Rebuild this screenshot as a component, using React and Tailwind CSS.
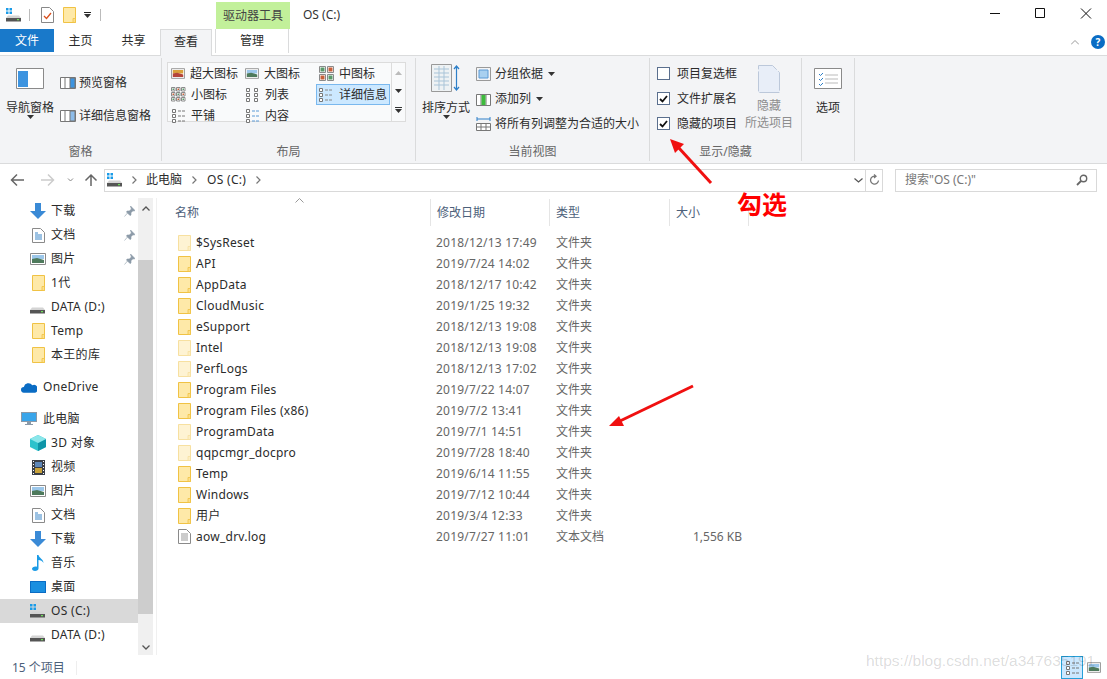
import React from 'react';

const Folder = ({ faded }) => (
  <svg width="13" height="16" viewBox="0 0 13 16" className={faded ? 'shrink-0 opacity-50' : 'shrink-0'}>
    <path d="M.5.500h12v15H.5z" fill="#fde28f" stroke="#f0c244" />
    <path d="M1 1h11v14H1z" fill="#fee9a8" />
    <path d="M10 15.500v-4h2.500v4z" fill="#fde08a" stroke="#f0c244" strokeWidth=".8" />
  </svg>
);

const Drive = ({ win }) => (
  <svg width="16" height="14" viewBox="0 0 16 14" className="shrink-0">
    {win && <path d="M0 0h2.500v2.500H0zM3.500 0H6v2.500H3.500zM0 3.500h2.500V6H0zM3.500 3.500H6V6H3.500z" fill="#1a9be8" />}
    <path d="M2 7.500h11l2 2.500H0z" fill="#d4d4d4" />
    <path d="M0 10h15v3.500H0z" fill="#555" />
    <path d="M11 11h2v1.200h-2z" fill="#6fe05a" />
  </svg>
);

const Pic = ({ w = 16, h = 12, art }) => (
  <svg width={w} height={h} viewBox="0 0 16 12" className="shrink-0">
    <path d="M.5.500h15v11H.5z" fill="#fff" stroke="#8a8a8a" />
    <path d="M2 2h12v4H2z" fill={art ? '#d9a03a' : '#9cc7ea'} />
    <path d="M2 6l5-1 7 2v3H2z" fill={art ? '#b5453a' : '#4e7a5c'} />
  </svg>
);

const Doc = () => (
  <svg width="13" height="15" viewBox="0 0 13 15" className="shrink-0">
    <path d="M.5.500h8l4 4v10H.5z" fill="#fff" stroke="#8a8a8a" />
    <path d="M3 5h3M3 7h7M3 9h7M3 11h7" stroke="#3b86c8" />
  </svg>
);

const Down = () => (
  <svg width="16" height="16" viewBox="0 0 16 16" className="shrink-0">
    <path d="M5 0h6v8h5l-8 8-8-8h5z" fill="#3a8ad6" />
  </svg>
);

const Pin = () => (
  <svg width="11" height="11" viewBox="0 0 11 11" className="shrink-0">
    <path d="M6.500 0L11 4.500l-1 .6-1-.4-2 2v2.300l-1 .6L2.500 6l.6-1h2.300l2-2-.4-1zM3.500 7L.5 10.500" fill="#8c9aa8" stroke="#8c9aa8" strokeWidth=".6" />
  </svg>
);

const Caret = () => (
  <svg width="7" height="4" viewBox="0 0 7 4" className="shrink-0"><path d="M0 0h7L3.500 4z" fill="#333" /></svg>
);

const Chevron = ({ className }) => (
  <svg width="5" height="8" viewBox="0 0 5 8" className={className}><path d="M.5.500L4 4 .5 7.500" fill="none" stroke="#777" strokeWidth="1.200" /></svg>
);

const Grid = ({ n, cell, gap }) => {
  const boxes = [];
  for (let y = 0; y < n; y++) {
    for (let x = 0; x < n; x++) {
      const px = 0.5 + x * (cell + gap);
      const py = 0.5 + y * (cell + gap);
      boxes.push(<path key={`b${x}-${y}`} d={`M${px} ${py}h${cell}v${cell}h-${cell}z`} fill="#fff" stroke="#8a8a8a" />);
      boxes.push(<path key={`d${x}-${y}`} d={`M${px + 1} ${py + 1}h${cell - 2}v${cell - 2}h-${cell - 2}z`} fill={(x + y) % 2 ? '#c9603a' : '#5a9a6a'} />);
    }
  }
  return <svg width="15" height="15" viewBox="0 0 15 15" className="shrink-0">{boxes}</svg>;
};

const ListGlyph = ({ cols, lines }) => (
  <svg width="15" height="15" viewBox="0 0 15 15" className="shrink-0">
    {[...Array(cols)].map((_, c) => [0, 5, 10].map(y => (
      <path key={`${c}${y}`} d={`M${1.500 + c * 8} ${1.500 + y}h3v3h-3z`} fill="#fff" stroke="#777" />
    )))}
    {lines && [3, 8, 13].map(y => <path key={y} d={`M7 ${y}h8`} stroke={lines} strokeDasharray="3 1" />)}
  </svg>
);

const GalleryCell = ({ icon, label, active }) => (
  <div className={active
    ? 'flex items-center w-[74px] h-[21px] pl-[1px] gap-[6px] bg-[#cce8ff] border border-[#7ab8ee] shrink-0'
    : 'flex items-center w-[74px] h-[21px] pl-[3px] gap-[5px] shrink-0'}>
    {icon}
    <span className="whitespace-nowrap">{label}</span>
  </div>
);

const Group = ({ w, label, children, last }) => (
  <div className={`flex flex-col shrink-0 h-[103px] mt-[3px] ${last ? '' : 'border-r border-[#dadbdc]'}`} style={{ width: w }}>
    <div className="h-[84px] flex">{children}</div>
    <div className="flex-1 flex items-center justify-center text-[#666]">{label}</div>
  </div>
);

const Big = ({ icon, label, caret, w }) => (
  <div className="flex flex-col items-center shrink-0" style={{ width: w }}>
    <div className="h-[31px] flex items-end justify-center">{icon}</div>
    <div className="mt-[11px] leading-[16px] whitespace-nowrap">{label}</div>
    {caret && <div className="-mt-[1px]"><Caret /></div>}
  </div>
);

const rows = [
  ['$SysReset', '2018/12/13 17:49', '文件夹', '', true],
  ['API', '2019/7/24 14:02', '文件夹'],
  ['AppData', '2018/12/17 10:42', '文件夹'],
  ['CloudMusic', '2019/1/25 19:32', '文件夹'],
  ['eSupport', '2018/12/13 19:08', '文件夹'],
  ['Intel', '2018/12/13 19:08', '文件夹', '', true],
  ['PerfLogs', '2018/12/13 17:02', '文件夹', '', true],
  ['Program Files', '2019/7/22 14:07', '文件夹'],
  ['Program Files (x86)', '2019/7/2 13:41', '文件夹'],
  ['ProgramData', '2019/7/1 14:51', '文件夹', '', true],
  ['qqpcmgr_docpro', '2019/7/28 18:40', '文件夹', '', true],
  ['Temp', '2019/6/14 11:55', '文件夹'],
  ['Windows', '2019/7/12 10:44', '文件夹'],
  ['用户', '2019/3/4 12:33', '文件夹'],
];

const NavRow = ({ icon, label, pin, active, top }) => (
  <div className={`flex items-center h-[24px] ${top ? 'pl-[21px] gap-[6px]' : 'pl-[30px] gap-[5px]'} ${active ? 'bg-[#d9d9d9]' : ''}`}>
    <div className="w-[16px] flex justify-center shrink-0">{icon}</div>
    <span className="flex-1 whitespace-nowrap tracking-[.3px]">{label}</span>
    {pin && <div className="mr-[3px]"><Pin /></div>}
  </div>
);

const Cloud = () => (
  <svg width="17" height="11" viewBox="0 0 17 11"><path d="M3 11a3 3 0 010-6 5 5 0 019-2 4 4 0 013 8z" fill="#0a6cc4" /></svg>
);
const Monitor = () => (
  <svg width="16" height="14" viewBox="0 0 16 14"><path d="M0 0h16v10H0z" fill="#8a99a8" /><path d="M1 1h14v8H1z" fill="#39a5ea" /><path d="M6 10h4v2h2v1H4v-1h2z" fill="#8a99a8" /></svg>
);
const Cube = () => (
  <svg width="16" height="16" viewBox="0 0 16 16"><path d="M8 0l8 4v8l-8 4-8-4V4z" fill="#2dc2cc" /><path d="M8 8l8-4v8l-8 4z" fill="#0e95a8" /><path d="M8 0l8 4-8 4-8-4z" fill="#8be6ea" /></svg>
);
const Film = () => (
  <svg width="13" height="15" viewBox="0 0 13 15"><path d="M0 0h13v15H0z" fill="#3b3f48" /><path d="M3 2h7v5H3z" fill="#5d86b8" /><path d="M3 8h7v5H3z" fill="#c9a23a" /><path d="M1 1h1v1H1zM1 4h1v1H1zM1 7h1v1H1zM1 10h1v1H1zM1 13h1v1H1zM11 1h1v1h-1zM11 4h1v1h-1zM11 7h1v1h-1zM11 10h1v1h-1zM11 13h1v1h-1z" fill="#fff" /></svg>
);
const Note = () => (
  <svg width="12" height="16" viewBox="0 0 12 16"><path d="M5 0h1.500c.5 3 5 4 5 8-1-2-3-3-5-3v8.500c0 1.500-1.500 2.500-3.500 2.500S0 15 0 13.800 1.500 11.500 3.500 11.500c.6 0 1 .1 1.500.3z" fill="#1b9be6" /></svg>
);
const Desk = () => (
  <svg width="16" height="12" viewBox="0 0 16 12"><path d="M0 0h16v12H0z" fill="#1a8fe0" /><path d="M0 11h16v1H0z" fill="#0a5ea8" /><path d="M.5.500h15v11H.5z" fill="none" stroke="#0a6cc4" /></svg>
);

export default function App() {
  return (
    <div className="relative w-[1107px] h-[679px] overflow-hidden bg-white text-[12px] text-[#2b2b2b] font-['Noto_Sans','Noto_Sans_CJK_SC',sans-serif]">
      {/* title bar */}
      <div className="flex h-[29px] items-center">
        <div className="pl-[6px] w-[29px]"><Drive win /></div>
        <div className="w-px h-[12px] bg-[#bbb]" />
        <svg width="13" height="16" viewBox="0 0 13 16" className="ml-[11px]">
          <path d="M.5.500h8l4 4v11H.5z" fill="#fff" stroke="#888" />
          <path d="M3 9l2.500 2.500L10 6" fill="none" stroke="#d9501e" strokeWidth="1.300" />
        </svg>
        <div className="ml-[9px]"><Folder /></div>
        <div className="ml-[8px] flex flex-col items-center gap-[1px]"><div className="w-[7px] h-px bg-[#222]" /><Caret /></div>
        <div className="ml-[9px] w-px h-[12px] bg-[#bbb]" />
        <div className="ml-[115px] w-[74px] h-[27px] mt-[2px] bg-[#c2f09a] flex items-center justify-center text-[#444]">驱动器工具</div>
        <div className="ml-[13px] text-[#333]">OS (C:)</div>
        <svg width="117" height="14" viewBox="0 0 117 14" className="ml-auto mr-[3px] mb-[3px]">
          <path d="M3 7.500h10M48.500 2.500h9v9h-9zM94 2.500l10 10M104 2.500l-10 10" fill="none" stroke="#111" />
        </svg>
      </div>

      {/* tabs */}
      <div className="relative z-10 flex h-[27px] -mb-px items-start border-b border-[#dadbdc]">
        <div className="w-[54px] h-[23px] pt-[1px] bg-[#1979ca] text-white flex items-center justify-center">文件</div>
        <div className="w-[53px] h-[23px] pt-[1px] flex items-center justify-center">主页</div>
        <div className="w-[53px] h-[23px] pt-[1px] flex items-center justify-center">共享</div>
        <div className="w-[52px] h-[27px] bg-[#f3f4f6] border border-b-0 border-[#dadbdc] flex items-center justify-center pb-[3px]">查看</div>
        <div className="ml-[3px] w-[74px] h-[24px] border-x border-[#dadbdc] flex items-center justify-center">管理</div>
        <svg width="8" height="5" viewBox="0 0 8 5" className="ml-auto mt-[11px] mr-[12px]"><path d="M0 4.500l4-4 4 4" fill="none" stroke="#999" /></svg>
        <div className="w-[14px] h-[14px] mt-[6px] mr-[2px] rounded-full bg-[#0a6cc4] text-white text-[10px] font-bold leading-[14px] text-center">?</div>
      </div>

      {/* ribbon */}
      <div className="flex h-[109px] bg-[#f3f4f6] border-b border-[#dadbdc]">
        <Group w={162} label="窗格">
          <Big w={60} caret label="导航窗格" icon={
            <svg width="28" height="21" viewBox="0 0 28 21"><path d="M.5.500h27v20H.5z" fill="#fff" stroke="#8a8a8a" /><path d="M2 3h10v16H2z" fill="#3d94e0" /></svg>
          } />
          <div className="flex flex-col pt-[19px] gap-[21px] whitespace-nowrap">
            <div className="flex items-center gap-[3px] h-[12px]"><svg width="16" height="12" viewBox="0 0 16 12"><path d="M.5.500h15v11H.5z" fill="#fff" stroke="#777" /><path d="M5 1v10M10 1h5v10h-5z" fill="#3d94e0" stroke="#777" /></svg>预览窗格</div>
            <div className="flex items-center gap-[3px] h-[12px]"><svg width="16" height="12" viewBox="0 0 16 12"><path d="M.5.500h15v11H.5z" fill="#fff" stroke="#777" /><path d="M5 1v10M10 1h5v10h-5z" fill="#8cbcea" stroke="#777" /></svg>详细信息窗格</div>
          </div>
        </Group>

        <Group w={254} label="布局">
          <div className="mt-[4px] ml-[5px] w-[239px] h-[60px] border border-[#dcdcdc] bg-[#f9fafb] flex">
            <div className="w-[223px] flex flex-wrap content-start">
              <GalleryCell icon={<Pic w={14} h={11} art />} label="超大图标" />
              <GalleryCell icon={<Pic w={14} h={11} />} label="大图标" />
              <GalleryCell icon={<Grid n={2} cell={6} gap={2} />} label="中图标" />
              <GalleryCell icon={<Grid n={3} cell={3.500} gap={1.500} />} label="小图标" />
              <GalleryCell icon={<ListGlyph cols={2} />} label="列表" />
              <GalleryCell icon={<ListGlyph cols={1} lines="#888" />} label="详细信息" active />
              <GalleryCell icon={<ListGlyph cols={1} lines="#777" />} label="平铺" />
              <GalleryCell icon={<ListGlyph cols={1} lines="#5a9ad6" />} label="内容" />
            </div>
            <div className="flex-1 border-l border-[#dcdcdc] flex flex-col items-center pt-[8px] gap-[14px]">
              <svg width="7" height="4" viewBox="0 0 7 4"><path d="M0 4h7L3.500 0z" fill="#bbb" /></svg>
              <Caret />
              <div className="flex flex-col items-center gap-[1px]"><div className="w-[7px] h-px bg-[#333]" /><Caret /></div>
            </div>
          </div>
        </Group>

        <Group w={234} label="当前视图">
          <Big w={60} caret label="排序方式" icon={
            <svg width="30" height="28" viewBox="0 0 30 28" className="-mb-[3px]"><path d="M.5.500h20v27H.5z" fill="#eef2f4" stroke="#999" /><path d="M3 5h15M3 9h15M3 13h15M3 17h15M3 21h15M8 2v24M13 2v24" stroke="#a9c4d8" /><path d="M25.500 2v24M23 5l2.500-3L28 5M23 23l2.500 3 2.500-3" fill="none" stroke="#2d7fc8" strokeWidth="1.200" /></svg>
          } />
          <div className="flex flex-col pt-[3px] whitespace-nowrap">
            <div className="flex items-center h-[25px] gap-[4px]"><svg width="15" height="14" viewBox="0 0 15 14"><path d="M.5.500h14v13H.5z" fill="none" stroke="#999" /><path d="M3 3h9v8H3z" fill="#a8d0f0" stroke="#5a9ad6" /></svg>分组依据<span className="ml-[1px]"><Caret /></span></div>
            <div className="flex items-center h-[25px] gap-[4px]"><svg width="15" height="14" viewBox="0 0 15 14"><path d="M.5 2.500h14v11H.5zM5 3v10M10 3v10" fill="#fff" stroke="#777" /><path d="M5.500 3h4v10h-4z" fill="#3dbb3d" /></svg>添加列<span className="ml-[1px]"><Caret /></span></div>
            <div className="flex items-center h-[25px] gap-[4px]"><svg width="15" height="14" viewBox="0 0 15 14"><path d="M1 2h13M1 0v4M14 0v4" fill="none" stroke="#2d7fc8" /><path d="M.5 6.500h14v7H.5zM5 7v6M10 7v6M1 10h13" fill="#fff" stroke="#777" /></svg>将所有列调整为合适的大小</div>
          </div>
        </Group>

        <Group w={152} label="显示/隐藏">
          <div className="flex flex-col pt-[3px] pl-[7px] w-[95px] shrink-0 whitespace-nowrap">
            {[['项目复选框', false], ['文件扩展名', true], ['隐藏的项目', true]].map(([t, on]) => (
              <div key={t} className="flex items-center h-[25px] gap-[7px]">
                <div className="w-[13px] h-[13px] border border-[#5a6f8e] bg-white flex items-center justify-center">
                  {on && <svg width="9" height="8" viewBox="0 0 9 8"><path d="M1 4l2.500 2.500L8 1" fill="none" stroke="#111" strokeWidth="1.800" /></svg>}
                </div>
                {t}
              </div>
            ))}
          </div>
          <div className="flex flex-col items-center w-[48px] shrink-0 text-[#8d8d8d] whitespace-nowrap">
            <svg width="22" height="28" viewBox="0 0 22 28" className="mt-[7px]"><path d="M.5.500h14l7 7v20H.5z" fill="#e8eef8" stroke="#bcc8da" strokeDasharray="20 2" /></svg>
            <div className="mt-[4px] leading-[17px]">隐藏</div>
            <div className="leading-[17px]">所选项目</div>
          </div>
        </Group>

        <Group w={53} label="">
          <Big w={52} label="选项" icon={
            <svg width="28" height="21" viewBox="0 0 28 21"><path d="M.5.500h27v20H.5z" fill="#fff" stroke="#8a8a8a" /><path d="M11 7h13M11 11h13M11 15h13" stroke="#bbb" /><path d="M5 6l1.500 1.500L9 5M5 11l1.500 1.500L9 10M5 16l1.500 1.500L9 15" fill="none" stroke="#2d7fc8" /></svg>
          } />
        </Group>
      </div>

      {/* address bar */}
      <div className="flex items-center h-[27px] mt-[1px] pt-[3px]">
        <svg width="94" height="14" viewBox="0 0 94 14" className="ml-[10px]">
          <path d="M14 7H2M7 1.500L1.500 7 7 12.500" fill="none" stroke="#666" strokeWidth="1.500" />
          <path d="M31 7h12M38 1.500L43.500 7 38 12.500" fill="none" stroke="#ccc" strokeWidth="1.500" />
          <path d="M58 5.500l2.500 2.500L63 5.500" fill="none" stroke="#888" />
          <path d="M81 13V2M75.500 7.500L81 2l5.500 5.500" fill="none" stroke="#666" strokeWidth="1.500" />
        </svg>
        <div className="w-[762px] h-[23px] border border-[#d9d9d9] flex items-center pl-[2px]">
          <Drive win />
          <Chevron className="ml-[9px]" />
          <span className="ml-[9px]">此电脑</span>
          <Chevron className="ml-[10px]" />
          <span className="ml-[10px] tracking-[.3px]">OS (C:)</span>
          <Chevron className="ml-[10px]" />
          <svg width="9" height="5" viewBox="0 0 9 5" className="ml-auto mr-[2px]"><path d="M.5.500L4.500 4l4-3.500" fill="none" stroke="#555" strokeWidth="1.200" /></svg>
        </div>
        <div className="w-[17px] h-[23px] border border-l-0 border-[#d9d9d9] flex items-center justify-center">
          <svg width="11" height="12" viewBox="0 0 11 12"><path d="M9.500 6.500a4 4 0 11-3-4.300M5 .5l2 1.700L5 4" fill="none" stroke="#777" strokeWidth="1.300" /></svg>
        </div>
        <div className="ml-[12px] w-[202px] h-[23px] border border-[#d9d9d9] flex items-center pl-[9px] pr-[8px] text-[#777]">
          <span>搜索"OS (C:)"</span>
          <svg width="12" height="12" viewBox="0 0 12 12" className="ml-auto"><circle cx="7.500" cy="4.500" r="3.200" fill="none" stroke="#666" strokeWidth="1.400" /><path d="M5 7l-4 4" stroke="#666" strokeWidth="1.800" /></svg>
        </div>
      </div>

      {/* main */}
      <div className="flex h-[457px] mt-[6px]">
        <div className="w-[138px] shrink-0 pt-[1px]">
          <NavRow icon={<Down />} label="下载" pin />
          <NavRow icon={<Doc />} label="文档" pin />
          <NavRow icon={<Pic />} label="图片" pin />
          <NavRow icon={<Folder />} label="1代" />
          <NavRow icon={<Drive />} label="DATA (D:)" />
          <NavRow icon={<Folder />} label="Temp" />
          <NavRow icon={<Folder />} label="本王的库" />
          <div className="h-[8px]" />
          <NavRow top icon={<Cloud />} label="OneDrive" />
          <div className="h-[8px]" />
          <NavRow top icon={<Monitor />} label="此电脑" />
          <NavRow icon={<Cube />} label="3D 对象" />
          <NavRow icon={<Film />} label="视频" />
          <NavRow icon={<Pic />} label="图片" />
          <NavRow icon={<Doc />} label="文档" />
          <NavRow icon={<Down />} label="下载" />
          <NavRow icon={<Note />} label="音乐" />
          <NavRow icon={<Desk />} label="桌面" />
          <NavRow icon={<Drive win />} label="OS (C:)" active />
          <NavRow icon={<Drive />} label="DATA (D:)" />
        </div>

        <div className="w-[15px] shrink-0 bg-[#f0f0f0] flex flex-col">
          <div className="h-[20px] flex items-center justify-center"><svg width="8" height="5" viewBox="0 0 8 5"><path d="M.5 4.500L4 1l3.500 3.500" fill="none" stroke="#555" strokeWidth="1.300" /></svg></div>
          <div className="h-[42px]" />
          <div className="h-[354px] bg-[#cdcdcd]" />
          <div className="flex-1 flex items-end justify-center pb-[5px]"><svg width="8" height="5" viewBox="0 0 8 5"><path d="M.5.500L4 4 7.500.5" fill="none" stroke="#555" strokeWidth="1.300" /></svg></div>
        </div>

        <div className="flex-1 ml-[3px] border-l border-[#f0f0f0] pl-[21px] relative">
          <div className="flex h-[28px] pt-[1px] items-center text-[#4c607a] -ml-[3px]">
            <div className="w-[255px] h-full flex items-center">名称</div>
            <div className="w-[119px] h-full flex items-center border-l border-[#e5e5e5] pl-[6px]">修改日期</div>
            <div className="w-[120px] h-full flex items-center border-l border-[#e5e5e5] pl-[6px]">类型</div>
            <div className="w-[80px] h-full flex items-center border-x border-[#e5e5e5] pl-[6px]">大小</div>
          </div>
          <svg width="9" height="5" viewBox="0 0 9 5" className="absolute left-[138px] top-0"><path d="M.5 4.500L4.500.5l4 4" fill="none" stroke="#999" /></svg>
          <div className="pt-[6px]">
            {rows.map(([name, date, type, size, faded]) => (
              <div key={name} className="flex items-center h-[21px]">
                <div className="w-[258px] flex items-center gap-[5px]"><Folder faded={faded} /><span className="whitespace-nowrap tracking-[.25px]">{name}</span></div>
                <div className="w-[120px] text-[#666] whitespace-nowrap tracking-[.2px]">{date}</div>
                <div className="w-[100px] text-[#666]">{type}</div>
                <div className="w-[86px] text-right text-[#666]">{size}</div>
              </div>
            ))}
            <div className="flex items-center h-[21px]">
              <div className="w-[258px] flex items-center gap-[5px]">
                <svg width="13" height="15" viewBox="0 0 13 15"><path d="M.5.500h8l4 4v10H.5z" fill="#fff" stroke="#8a8a8a" /><path d="M3 5h7M3 7h7M3 9h7M3 11h7" stroke="#999" /></svg>
                <span className="tracking-[.25px]">aow_drv.log</span>
              </div>
              <div className="w-[120px] text-[#666] tracking-[.2px]">2019/7/27 11:01</div>
              <div className="w-[100px] text-[#666]">文本文档</div>
              <div className="w-[86px] text-right text-[#666]">1,556 KB</div>
            </div>
          </div>
        </div>
      </div>

      {/* status bar */}
      <div className="flex items-center h-[24px] pl-[12px] pt-[1px] text-[#4c607a]">
        <span className="w-[64px]">15 个项目</span>
        <div className="w-px h-[14px] bg-[#eee]" />
        <div className="ml-auto w-[22px] h-[23px] self-end bg-[#cce8ff] border border-[#26a0da] flex items-center justify-center"><ListGlyph cols={1} lines="#777" /></div>
        <div className="ml-[4px] mr-[6px]"><Pic w={14} h={11} /></div>
      </div>

      {/* annotations */}
      <svg width="1107" height="679" viewBox="0 0 1107 679" className="absolute left-0 top-0 pointer-events-none">
        <path d="M711 183L678 147" stroke="#f01010" strokeWidth="3" />
        <path d="M670 139l14 5-9 9z" fill="#f01010" />
        <path d="M693 386L620 421" stroke="#f01010" strokeWidth="3" />
        <path d="M609 426l10-10 5 10z" fill="#f01010" />
      </svg>
      <div className="absolute left-[737px] top-[187px] text-[25px] leading-[34px] font-bold text-[#ff0000]">勾选</div>
      <div className="absolute left-[866px] top-[651px] text-[15.500px] leading-[20px] text-[#000]/15 font-['Liberation_Sans',sans-serif] whitespace-nowrap">https://blog.csdn.net/a347635191</div>
    </div>
  );
}
